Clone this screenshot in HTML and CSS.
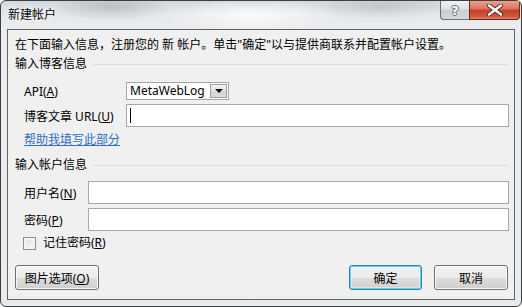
FILE: index.html
```html
<!DOCTYPE html>
<html>
<head>
    <title>新建帐户</title>
    <link rel="stylesheet" href="styles.css">
</head>
<body>
    <div class="window">
        <div class="titlebar">
            <span class="title">新建帐户</span>
            <div class="controls">
                <span class="ctl-help">?</span>
                <span class="ctl-close">
                    <svg width="18" height="12" viewBox="0 0 18 12">
                        <path d="M3 1.5 L15 10.5 M15 1.5 L3 10.5" stroke="#5a2418" stroke-width="4.2" stroke-linecap="round"/>
                        <path d="M3 1.5 L15 10.5 M15 1.5 L3 10.5" stroke="#fff" stroke-width="2.4" stroke-linecap="round"/>
                    </svg>
                </span>
            </div>
        </div>

        <div class="client">
            <p class="intro">在下面输入信息，注册您的 新 帐户。单击"确定"以与提供商联系并配置帐户设置。</p>

            <div class="group-title">输入博客信息</div>
            <div class="row row-api">
                <label class="blog-label">API(<u>A</u>)</label>
                <div class="select">
                    <span class="select-value">MetaWebLog</span>
                    <span class="drop"><span class="arrow"></span></span>
                </div>
            </div>
            <div class="row row-url">
                <label class="blog-label">博客文章 URL(<u>U</u>)</label>
                <div class="textbox"><span class="caret"></span></div>
            </div>
            <a class="help-link" href="#">帮助我填写此部分</a>

            <div class="group-title group-two">输入帐户信息</div>
            <div class="row row-user">
                <label class="account-label">用户名(<u>N</u>)</label>
                <div class="textbox"></div>
            </div>
            <div class="row row-pass">
                <label class="account-label">密码(<u>P</u>)</label>
                <div class="textbox"></div>
            </div>
            <div class="check-row">
                <span class="checkbox"></span>
                <span>记住密码(<u>R</u>)</span>
            </div>

            <div class="buttons">
                <button class="btn btn-wide">图片选项(<u>O</u>)</button>
                <div class="spacer"></div>
                <button class="btn btn-default">确定</button>
                <button class="btn">取消</button>
            </div>
        </div>
    </div>
</body>
</html>
```

FILE: styles.css
```css
body {
    margin: 0;
    font-family: "Noto Sans", "Noto Sans CJK SC", sans-serif;
    font-size: 12px;
    color: #000;
    background: #fff;
}
.window {
    width: 522px;
    height: 307px;
    box-sizing: border-box;
    border: 1px solid #3c3f42;
    border-radius: 6px;
    display: flex;
    flex-direction: column;
    overflow: hidden;
    background:
        radial-gradient(ellipse 60px 14px at 110px 6px, rgba(150,155,160,0.45), transparent),
        radial-gradient(ellipse 70px 12px at 380px 6px, rgba(160,165,170,0.4), transparent),
        radial-gradient(ellipse 90px 16px at 250px 14px, rgba(255,255,255,0.8), transparent),
        linear-gradient(#d3d8dc, #e4e7ea 12px, #ebedef 28px, #e8eaec);
}
.titlebar {
    height: 28px;
    display: flex;
    justify-content: space-between;
    align-items: flex-start;
}
.title {
    margin: 6px 0 0 7px;
    line-height: 16px;
    color: #000;
    text-shadow: 0 0 6px #fff, 0 0 3px #fff;
}
.controls {
    display: flex;
    margin-right: 1px;
}
.ctl-help, .ctl-close {
    height: 19px;
    box-sizing: border-box;
    display: flex;
    align-items: center;
    justify-content: center;
    border: 1px solid #6d7073;
    border-top: none;
}
.ctl-help {
    width: 29px;
    border-radius: 0 0 0 4px;
    border-right: none;
    background: linear-gradient(#eef0f2, #dfe3e6 45%, #c8cdd1 50%, #d4d8dc);
    color: #fff;
    font-family: "DejaVu Sans", sans-serif;
    font-weight: bold;
    font-size: 13px;
    text-shadow: 1px 0 #6a6e72, -1px 0 #6a6e72, 0 1px #6a6e72, 0 -1px #6a6e72;
}
.ctl-close {
    width: 51px;
    border-radius: 0 0 4px 0;
    border-color: #6a2a1e;
    background: linear-gradient(#eaa08f, #d9725c 45%, #c2412a 50%, #d0553a 85%, #e0826a);
}
.client {
    margin: 0 6px;
    height: 271px;
    box-sizing: border-box;
    border: 1px solid #5f6367;
    background: #f0f0f0;
    padding: 7px 5px 0 7px;
}
.intro {
    margin: 0;
    line-height: 16px;
}
.group-title {
    margin-top: 3px;
    line-height: 16px;
    display: flex;
    align-items: center;
}
.group-title::after {
    content: "";
    flex: 1;
    height: 1px;
    background: #d5dfe5;
    margin-left: 6px;
}
.group-two {
    margin-top: 9px;
}
.row {
    display: flex;
    align-items: center;
}
.row label {
    margin-left: 9px;
}
.blog-label {
    width: 102px;
}
.account-label {
    width: 64px;
}
.row-api {
    margin-top: 10px;
    height: 18px;
}
.row-url {
    margin-top: 4px;
}
.row-user {
    margin-top: 8px;
}
.row-pass {
    margin-top: 4px;
}
.select {
    width: 103px;
    height: 18px;
    box-sizing: border-box;
    border: 1px solid #a3a6ab;
    background: #fff;
    display: flex;
    align-items: center;
    justify-content: space-between;
}
.select-value {
    margin-left: 3px;
    line-height: 14px;
}
.drop {
    width: 17px;
    height: 14px;
    margin-right: 1px;
    box-sizing: border-box;
    border: 1px solid #9a9da1;
    background: linear-gradient(#f4f4f4, #e2e2e2 50%, #d3d3d3 51%, #dcdcdc);
    display: flex;
    align-items: center;
    justify-content: center;
}
.arrow {
    width: 0;
    height: 0;
    border-left: 4px solid transparent;
    border-right: 4px solid transparent;
    border-top: 4px solid #111;
}
.textbox {
    flex: 1;
    height: 23px;
    box-sizing: border-box;
    border: 1px solid #a7a9ac;
    background: #fff;
    display: flex;
    align-items: center;
}
.caret {
    width: 1px;
    height: 15px;
    margin-left: 3px;
    background: #000;
}
.help-link {
    display: block;
    margin: 5px 0 0 9px;
    line-height: 16px;
    color: #2f6fc5;
    text-decoration: underline;
    width: max-content;
}
.check-row {
    margin-top: 4px;
    line-height: 16px;
    display: flex;
    align-items: center;
    padding-left: 8px;
}
.checkbox {
    width: 13px;
    height: 13px;
    box-sizing: border-box;
    border: 1px solid #8e8f8f;
    background: linear-gradient(135deg, #dcdcdc, #fbfbfb);
    box-shadow: inset 0 0 0 2px #f4f4f4;
    margin-right: 7px;
}
.buttons {
    margin-top: 14px;
    display: flex;
    padding-right: 1px;
}
.spacer {
    flex: 1;
}
.btn {
    height: 25px;
    width: 74px;
    box-sizing: border-box;
    border: 1px solid #707070;
    border-radius: 3px;
    font-family: inherit;
    font-size: 12px;
    color: #000;
    padding: 0;
    background: linear-gradient(#f2f2f2, #ebebeb 50%, #dddddd 51%, #cfcfcf);
    box-shadow: inset 0 0 0 1px rgba(255,255,255,0.8);
    margin-left: 12px;
}
.btn-wide {
    width: 84px;
    margin-left: 0;
}
.btn-default {
    width: 73px;
    border-color: #3c7fb1;
    box-shadow: inset 0 0 0 1px #48d6fb, inset 0 0 0 2px rgba(255,255,255,0.4);
}
```
